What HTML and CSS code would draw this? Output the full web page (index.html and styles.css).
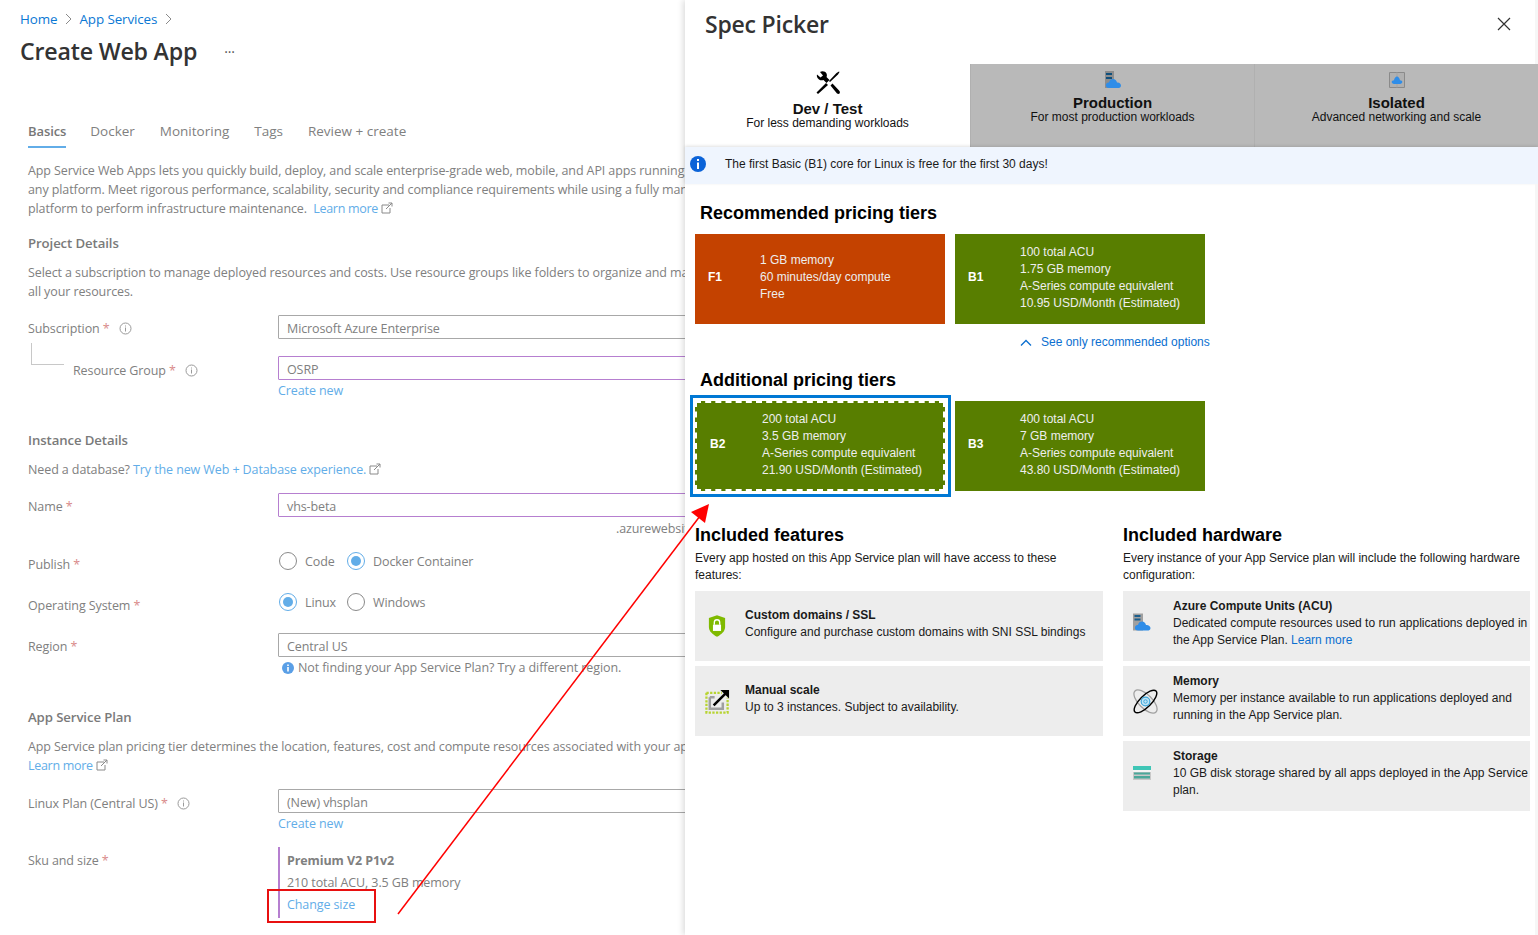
FILE: index.html
```html
<!DOCTYPE html>
<html lang="en">

<head>
    <meta charset="UTF-8">
    <meta name="viewport" content="width=device-width, initial-scale=1.0">
    <title>Create Web App</title>
    <link rel="stylesheet" href="styles.css">
</head>

<body>
    <div id="page">
        <div id="blade">
            <div class="crumbs">
                <a>Home</a>
                <svg class="crumb-sep" width="7" height="12" viewBox="0 0 7 12"><path d="M1 1l5 5-5 5" fill="none" stroke="#8a8a8a"/></svg>
                <a>App Services</a>
                <svg class="crumb-sep" width="7" height="12" viewBox="0 0 7 12"><path d="M1 1l5 5-5 5" fill="none" stroke="#8a8a8a"/></svg>
            </div>
            <div class="title-row">
                <h1>Create Web App</h1>
                <span class="dots">···</span>
            </div>

            <div class="content">
                <ul class="tabs">
                    <li class="tab-selected">Basics</li>
                    <li>Docker</li>
                    <li>Monitoring</li>
                    <li>Tags</li>
                    <li>Review + create</li>
                </ul>

                <p class="intro">App Service Web Apps lets you quickly build, deploy, and scale enterprise-grade web, mobile, and API apps running on<br>any platform. Meet rigorous performance, scalability, security and compliance requirements while using a fully managed<br>platform to perform infrastructure maintenance. &nbsp;<a class="learn">Learn more</a> <svg class="ext" width="12" height="12" viewBox="0 0 12 12"><path d="M8 3H1v8h8V6M5 7l6-6M7.500 1H11v3.500" fill="none" stroke="#8a8a8a"/></svg></p>

                <h2 class="sec-project">Project Details</h2>
                <p class="desc">Select a subscription to manage deployed resources and costs. Use resource groups like folders to organize and manage<br>all your resources.</p>

                <div class="row row-sub">
                    <label>Subscription <i>*</i> <svg class="tip" width="13" height="13" viewBox="0 0 13 13"><circle cx="6.5" cy="6.5" r="5.5" fill="none" stroke="#9a9a9a"/><path d="M6.5 5.500v4M6.5 3.500v1" stroke="#9a9a9a"/></svg></label>
                    <div class="input">Microsoft Azure Enterprise</div>
                </div>
                <div class="row row-rg">
                    <label class="sub-label"><span class="tree-line"></span><span>Resource Group <i>*</i> <svg class="tip" width="13" height="13" viewBox="0 0 13 13"><circle cx="6.5" cy="6.5" r="5.5" fill="none" stroke="#9a9a9a"/><path d="M6.5 5.500v4M6.5 3.500v1" stroke="#9a9a9a"/></svg></span></label>
                    <div>
                        <div class="input input-valid">OSRP</div>
                        <a class="below">Create new</a>
                    </div>
                </div>

                <h2 class="sec-instance">Instance Details</h2>
                <p class="desc">Need a database? <a>Try the new Web + Database experience.</a> <svg class="ext" width="12" height="12" viewBox="0 0 12 12"><path d="M8 3H1v8h8V6M5 7l6-6M7.500 1H11v3.500" fill="none" stroke="#8a8a8a"/></svg></p>

                <div class="row row-name">
                    <label>Name <i>*</i></label>
                    <div>
                        <div class="input input-valid">vhs-beta</div>
                        <div class="suffix">.azurewebsites.net</div>
                    </div>
                </div>
                <div class="row row-publish">
                    <label class="radio-label">Publish <i>*</i></label>
                    <div class="radios">
                        <span class="radio"></span><span class="radio-text">Code</span>
                        <span class="radio radio-on"></span><span class="radio-text">Docker Container</span>
                    </div>
                </div>
                <div class="row row-os">
                    <label class="radio-label">Operating System <i>*</i></label>
                    <div class="radios">
                        <span class="radio radio-on"></span><span class="radio-text">Linux</span>
                        <span class="radio"></span><span class="radio-text">Windows</span>
                    </div>
                </div>
                <div class="row row-region">
                    <label>Region <i>*</i></label>
                    <div>
                        <div class="input">Central US</div>
                        <div class="hint"><svg width="12" height="12" viewBox="0 0 12 12"><circle cx="6" cy="6" r="6" fill="#5a9fe6"/><path d="M6 5v4.500M6 2.500v1.500" stroke="#fff" stroke-width="1.600"/></svg>Not finding your App Service Plan? Try a different region.</div>
                    </div>
                </div>

                <h2 class="sec-plan">App Service Plan</h2>
                <p class="desc">App Service plan pricing tier determines the location, features, cost and compute resources associated with your app.<br><a class="learn">Learn more</a> <svg class="ext" width="12" height="12" viewBox="0 0 12 12"><path d="M8 3H1v8h8V6M5 7l6-6M7.500 1H11v3.500" fill="none" stroke="#8a8a8a"/></svg></p>

                <div class="row row-plan">
                    <label>Linux Plan (Central US) <i>*</i> <svg class="tip" width="13" height="13" viewBox="0 0 13 13"><circle cx="6.5" cy="6.5" r="5.5" fill="none" stroke="#9a9a9a"/><path d="M6.5 5.500v4M6.5 3.500v1" stroke="#9a9a9a"/></svg></label>
                    <div>
                        <div class="input">(New) vhsplan</div>
                        <a class="below">Create new</a>
                    </div>
                </div>
                <div class="row row-sku">
                    <label>Sku and size <i>*</i></label>
                    <div class="sku">
                        <b>Premium V2 P1v2</b>
                        <span>210 total ACU, 3.5 GB memory</span>
                        <a>Change size</a>
                    </div>
                </div>
            </div>
        </div>

        <div id="picker">
            <div class="picker-head">
                <h1>Spec Picker</h1>
                <svg width="14" height="14" viewBox="0 0 14 14"><path d="M1 1l12 12M13 1L1 13" stroke="#333" stroke-width="1.200"/></svg>
            </div>

            <div class="groups">
                <div class="group group-selected">
                    <svg width="26" height="26" viewBox="0 0 26 26"><path d="M3 24l-1.500-1.500L11 13l2 2zM14 11l7.500-8 2.500-1.500 .5 .5-1.500 2.500-8 7.500zM15.500 15.500l2-2 7 7.500c.5 1 .5 2 0 2.500s-1.500 .5-2.500 0z" fill="#000"/><path d="M2 4.500L5.500 7.500 8 5.500 5 2c2.500-1.500 5.500-.5 6.500 1.500 .5 1.500 .5 2.500 0 3.500l3 3-3 3-3-3c-1.500 .5-3 .5-4.500-.5C2 8 1.500 6 2 4.500z" fill="#000"/></svg>
                    <b>Dev / Test</b>
                    <span>For less demanding workloads</span>
                </div>
                <div class="group">
                    <svg width="18" height="18" viewBox="0 0 18 18"><path d="M1 0h9v17H1z" fill="#8d8d8d"/><path d="M2 2h6v2H2zM2 6h6v2H2z" fill="#0f4f7c"/><path d="M5 17c-2.500 0-3.500-1.500-3-3.500 .5-1.500 1.500-2 3-2C5.500 9 7 8 9 8s3.500 1.500 4 3.500c2-.5 4 1 4 3s-1.500 2.500-3 2.500z" fill="#2f8de8"/></svg>
                    <b>Production</b>
                    <span>For most production workloads</span>
                </div>
                <div class="group">
                    <svg width="18" height="18" viewBox="0 0 18 18"><path d="M1.500 1.500h15v15h-15z" fill="#b0b0b0" stroke="#8a8a8a"/><path d="M9 1.500v15" stroke="#a4a4a4"/><path d="M6 13c-1.300 0-2.300-.8-2.300-1.900S4.600 9.300 6 9.300C6.400 7.300 7.500 5.500 9 5.500s2.600 1.800 3 3.800c1.400 0 2.300.7 2.300 1.800S13.300 13 12 13z" fill="#2f8de8"/></svg>
                    <b>Isolated</b>
                    <span>Advanced networking and scale</span>
                </div>
            </div>

            <div class="banner">
                <svg width="16" height="16" viewBox="0 0 16 16"><circle cx="8" cy="8" r="8" fill="#0b63d8"/><path d="M8 6.500v6.500M8 3v2" stroke="#fff" stroke-width="2"/></svg>
                <span>The first Basic (B1) core for Linux is free for the first 30 days!</span>
            </div>

            <div class="picker-body">
                <h3 class="tier-title">Recommended pricing tiers</h3>
                <div class="cards">
                    <div class="card card-free">
                        <b>F1</b>
                        <div>1 GB memory<br>60 minutes/day compute<br>Free</div>
                    </div>
                    <div class="card">
                        <b>B1</b>
                        <div>100 total ACU<br>1.75 GB memory<br>A-Series compute equivalent<br>10.95 USD/Month (Estimated)</div>
                    </div>
                </div>
                <a class="see-only"><svg width="12" height="8" viewBox="0 0 12 8"><path d="M1 6.500l5-5 5 5" fill="none" stroke="#0b6fd0" stroke-width="1.300"/></svg>See only recommended options</a>

                <h3 class="tier-title tier-additional">Additional pricing tiers</h3>
                <div class="cards">
                    <div class="card-ring">
                        <div class="card card-focus">
                            <b>B2</b>
                            <div>200 total ACU<br>3.5 GB memory<br>A-Series compute equivalent<br>21.90 USD/Month (Estimated)</div>
                        </div>
                    </div>
                    <div class="card">
                        <b>B3</b>
                        <div>400 total ACU<br>7 GB memory<br>A-Series compute equivalent<br>43.80 USD/Month (Estimated)</div>
                    </div>
                </div>

                <div class="included">
                    <div class="inc-col">
                        <h3>Included features</h3>
                        <p>Every app hosted on this App Service plan will have access to these features:</p>
                        <div class="item item-feature">
                            <svg class="icon-shield" width="18" height="24" viewBox="0 0 20 24"><path d="M10 0l9 3v10c0 5-4 8-9 11-5-3-9-6-9-11V3z" fill="#7fba00"/><path d="M5.500 10.500h9v7h-9z" fill="#fff"/><path d="M7 10.500V8a3 3 0 0 1 6 0v2.500" fill="none" stroke="#fff" stroke-width="1.500"/></svg>
                            <div><b>Custom domains / SSL</b><br>Configure and purchase custom domains with SNI SSL bindings</div>
                        </div>
                        <div class="item item-feature">
                            <svg width="25" height="25" viewBox="0 0 26 26"><path d="M1.500 4h16M1.500 4v20.500h22V9" fill="none" stroke="#b8d432" stroke-width="2.400" stroke-dasharray="2.400 1.400"/><path d="M5 8.500h5M5 8.500v12h13.500V14" fill="none" stroke="#a0a0a0" stroke-width="2.600"/><path d="M9 17L22 4" stroke="#000" stroke-width="2.600"/><path d="M16 1h9v9z" fill="#000"/></svg>
                            <div><b>Manual scale</b><br>Up to 3 instances. Subject to availability.</div>
                        </div>
                    </div>
                    <div class="inc-col inc-hardware">
                        <h3>Included hardware</h3>
                        <p>Every instance of your App Service plan will include the following hardware configuration:</p>
                        <div class="item">
                            <svg class="icon-acu" width="18" height="19" viewBox="0 0 18 18"><path d="M0 0h10v17H0z" fill="#a0a0a0"/><path d="M1.500 1.500h6v2h-6zM1.500 5h6v2h-6z" fill="#1c5e8c"/><path d="M5 17c-2.500 0-3.500-1.500-3-3.500 .5-1.500 1.500-2 3-2C5.500 9 7 8 9 8s3.500 1.500 4 3.500c2-.5 4.500 1 4.500 3s-1.500 2.500-3 2.500z" fill="#2f8de8"/></svg>
                            <div><b>Azure Compute Units (ACU)</b><br>Dedicated compute resources used to run applications deployed in the App Service Plan. <a>Learn more</a></div>
                        </div>
                        <div class="item">
                            <svg width="25" height="25" viewBox="0 0 26 26"><ellipse cx="13" cy="13" rx="15.500" ry="7" transform="rotate(45 13 13)" fill="none" stroke="#a0a0a0" stroke-width="1.300"/><ellipse cx="13" cy="13" rx="15.500" ry="6" transform="rotate(-45 13 13)" fill="none" stroke="#000" stroke-width="1.500"/><circle cx="13" cy="13" r="4.500" fill="#bfe4f5" stroke="#3ca6dc" stroke-width="1.200"/><circle cx="13" cy="13" r="1.800" fill="none" stroke="#3ca6dc"/></svg>
                            <div><b>Memory</b><br>Memory per instance available to run applications deployed and running in the App Service plan.</div>
                        </div>
                        <div class="item">
                            <svg class="icon-storage" width="18" height="14" viewBox="0 0 18 14"><path d="M0 0h18v14H0z" fill="#c8c8c8"/><path d="M0 0h18v4H0z" fill="#3fc6b6"/><path d="M0 4h18v2H0z" fill="#f4f4f4"/><path d="M1 6.500h16v2H1z" fill="#4aa89a"/><path d="M1 10h16v2.500H1z" fill="#4aa89a"/></svg>
                            <div><b>Storage</b><br>10 GB disk storage shared by all apps deployed in the App Service plan.</div>
                        </div>
                    </div>
                </div>
            </div>
        </div>
    </div>

    <!-- red annotation drawn over the screenshot -->
    <svg id="markup" width="1538" height="935" viewBox="0 0 1538 935">
        <rect x="268" y="890" width="107" height="32" fill="none" stroke="#e81010" stroke-width="2"/>
        <path d="M398 914L700 516" stroke="#f00" stroke-width="1.500"/>
        <path d="M709 504L705 523 691 512z" fill="#f00"/>
    </svg>
</body>

</html>
```

FILE: styles.css
```css
* {
    margin: 0;
    padding: 0;
    box-sizing: border-box;
}

html,
body {
    height: 935px;
    overflow: hidden;
    background: #fff;
}

#page {
    display: flex;
    height: 935px;
}

#markup {
    position: absolute;
    top: 0;
    left: 0;
    pointer-events: none;
}

/* left blade, faded behind the picker */
#blade {
    width: 685px;
    flex: none;
    overflow: hidden;
    font-family: "Open Sans", "Liberation Sans", sans-serif;
    font-size: 12.5px;
    line-height: 19px;
    color: #808080;
    letter-spacing: -0.1px;
    white-space: nowrap;
}

#blade a {
    color: #62ade8;
}

#blade .learn {
    letter-spacing: -0.3px;
}

.crumbs {
    display: flex;
    align-items: center;
    gap: 7.5px;
    height: 38px;
    padding-left: 20px;
    font-size: 13.4px;
}

#blade .crumbs a {
    color: #0b78d4;
}

.title-row {
    display: flex;
    align-items: center;
    height: 26px;
    padding-left: 20px;
}

.title-row h1 {
    font-size: 23.2px;
    font-weight: 600;
    color: #333;
    letter-spacing: -0.2px;
}

.dots {
    margin-left: 27px;
    color: #555;
    font-size: 14px;
}

.content {
    padding-left: 28px;
}

.tabs {
    display: flex;
    gap: 25px;
    margin-top: 57px;
    list-style: none;
    font-size: 13.5px;
    line-height: 20px;
    letter-spacing: 0;
}

.tabs li {
    height: 27px;
}

.tabs .tab-selected {
    margin-right: -1px;
    font-size: 13px;
    font-weight: 600;
    color: #777;
    letter-spacing: -0.1px;
    border-bottom: 2px solid #62ade8;
}

.intro {
    margin-top: 13px;
}

.content h2 {
    font-size: 13.2px;
    font-weight: 600;
    color: #7a7a7a;
}

.sec-project {
    margin-top: 16px;
}

.sec-instance {
    margin-top: 31px;
}

.sec-plan {
    margin-top: 31px;
}

.desc {
    margin-top: 10px;
}

.ext {
    vertical-align: -1px;
}

.row {
    display: grid;
    grid-template-columns: 250px 500px;
}

.row label i {
    color: #d98a8a;
    font-style: normal;
}

.tip {
    margin-left: 6px;
    vertical-align: -2px;
}

.row-sub {
    height: 24px;
    margin-top: 14px;
    line-height: 28px;
}

.row-rg {
    margin-top: 17px;
}

.sub-label {
    display: flex;
    padding-top: 5px;
}

.tree-line {
    width: 33px;
    height: 22px;
    margin: -18px 9px 0 3px;
    border-left: 1px solid #c8c8c8;
    border-bottom: 1px solid #c8c8c8;
}

.row-name {
    margin-top: 14px;
    line-height: 28px;
}

.row-publish {
    margin-top: 12px;
}

.row-os {
    margin-top: 19px;
}

.row-region {
    margin-top: 18px;
    line-height: 28px;
}

.row-plan {
    margin-top: 14px;
    line-height: 29px;
}

.row-sku {
    margin-top: 14px;
}

.row-sku label {
    padding-top: 4px;
}

.radio-label {
    padding-top: 3px;
}

.input {
    height: 24px;
    padding-left: 8px;
    border: 1px solid #a8a8a8;
    border-radius: 1px;
    line-height: 26px;
}

.input-valid {
    border-color: #b67fd0;
}

.below {
    display: block;
    margin-top: 1px;
    line-height: 19px;
}

.suffix {
    padding-left: 338px;
    line-height: 23px;
}

.radios {
    display: flex;
    align-items: center;
    height: 18px;
    margin-left: 1px;
}

.radio {
    width: 18px;
    height: 18px;
    flex: none;
    border: 1px solid #8a8a8a;
    border-radius: 50%;
}

.radio-on {
    display: flex;
    align-items: center;
    justify-content: center;
    border-color: #62ade8;
}

.radio-on::after {
    content: "";
    width: 10px;
    height: 10px;
    border-radius: 50%;
    background: #62ade8;
}

.radio-text {
    width: 50px;
    padding-left: 8px;
}

.hint {
    display: flex;
    align-items: center;
    gap: 4px;
    margin-top: 1px;
    padding-left: 4px;
    line-height: 19px;
}

.sku {
    display: flex;
    flex-direction: column;
    padding: 3px 0 2px 7px;
    border-left: 2px solid #b67fd0;
    line-height: 22px;
}

/* picker */
#picker {
    display: flex;
    flex: 1;
    flex-direction: column;
    font-family: "Liberation Sans", Arial, sans-serif;
    font-size: 12px;
    line-height: 17px;
    color: #1a1a1a;
    box-shadow: -2px 0 6px rgba(0, 0, 0, 0.14);
}

.picker-head {
    display: flex;
    align-items: center;
    justify-content: space-between;
    height: 64px;
    padding: 0 24px 16px 20px;
    border-right: 3px solid #f6f6f6;
}

.picker-head h1 {
    font-family: "Open Sans", "Liberation Sans", sans-serif;
    font-size: 23px;
    font-weight: 600;
    letter-spacing: -0.2px;
    color: #333;
}

.groups {
    display: grid;
    grid-template-columns: 285px 284px 284px;
    height: 83px;
}

.group {
    display: flex;
    flex-direction: column;
    align-items: center;
    padding-top: 7px;
    background: #b9b9b9;
    border-left: 1px solid #b0b0b0;
    color: #111;
}

.group svg {
    margin-bottom: 6px;
}

.group b {
    font-size: 15px;
    line-height: 15px;
}

.group span {
    line-height: 14px;
}

.group-selected {
    padding-top: 6px;
    background: #fff;
    border-left: 0;
}

.group-selected svg {
    margin-bottom: 5px;
}

.banner {
    display: flex;
    align-items: center;
    gap: 19px;
    height: 37px;
    padding: 0 0 3px 5px;
    background: #eff5fe;
    box-shadow: 0 -1px 3px rgba(0, 0, 0, 0.12);
}

.picker-body {
    flex: 1;
    padding-left: 10px;
    border-right: 3px solid #f6f6f6;
}

.tier-title {
    margin: 19px 0 10px 5px;
    font-size: 18px;
    line-height: 21px;
    color: #000;
}

.tier-additional {
    margin-top: 19px;
}

.cards {
    display: flex;
    gap: 10px;
    align-items: flex-start;
}

.card {
    display: flex;
    align-items: center;
    width: 250px;
    height: 90px;
    padding: 0 0 3px 13px;
    background: #587e00;
    color: #eee;
}

.card b {
    width: 52px;
    flex: none;
    font-size: 12px;
    color: #fff;
}

.card-free {
    background: #c44200;
}

.card-ring {
    width: 250px;
    height: 90px;
    position: relative;
}

.card-ring::after {
    content: "";
    position: absolute;
    top: -6px;
    right: -6px;
    bottom: -6px;
    left: -5px;
    border: 3px solid #0078d4;
}

.card-focus {
    padding-left: 13px;
    border: 2px dashed #fff;
}

.see-only {
    display: flex;
    align-items: center;
    gap: 9px;
    width: 515px;
    height: 17px;
    margin-top: 10px;
    padding-left: 325px;
    color: #0b6fd0;
    white-space: nowrap;
}

.included {
    display: grid;
    grid-template-columns: 408px 407px;
    gap: 20px;
    margin-top: 34px;
}

.inc-col h3 {
    font-size: 18px;
    line-height: 21px;
    color: #000;
}

.inc-col p {
    margin: 4px 0 7px;
}

.item {
    display: grid;
    grid-template-columns: 50px 1fr;
    align-items: center;
    height: 70px;
    margin-bottom: 5px;
    background: #ededed;
}

.item svg {
    margin-left: 10px;
}

.item div {
    align-self: start;
    padding-top: 7px;
}

.item a {
    color: #0b6fd0;
}

.item-feature svg {
    margin-left: 10px;
}

.item-feature .icon-shield {
    margin-left: 13px;
}

.item-feature div {
    padding-top: 16px;
}

.icon-acu {
    margin-bottom: 7px;
}

.icon-storage {
    margin-bottom: 6px;
}
```
